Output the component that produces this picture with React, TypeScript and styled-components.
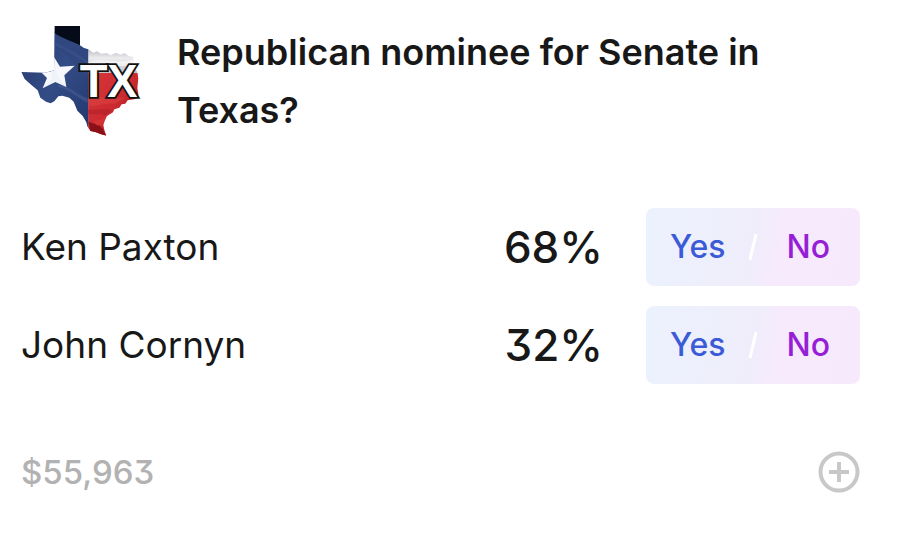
import React from "react";
import styled, { createGlobalStyle } from "styled-components";

const GlobalStyle = createGlobalStyle`
  *, *::before, *::after { box-sizing: border-box; }
  body {
    margin: 0;
    background: #ffffff;
    color: #181818;
    font-family: Inter, "Liberation Sans", sans-serif;
    font-feature-settings: "cv09";
  }
  button { font: inherit; border: 0; padding: 0; background: none; cursor: pointer; }
`;

const Card = styled.article`
  padding: 23px 40px 32px 21px;
`;

const Header = styled.header`
  display: flex;
  align-items: flex-start;
  gap: 36px;
`;

const StateLogo = styled.svg`
  flex: none;
  width: 120px;
  height: 116px;
`;

const Title = styled.h1`
  flex: 1;
  margin: 0;
  font-size: 36px;
  font-weight: 600;
  line-height: 58px;
`;

const Outcomes = styled.ul`
  display: grid;
  gap: 20px;
  margin: 69px 0 0;
  padding: 0;
  list-style: none;
`;

const Outcome = styled.li`
  display: flex;
  align-items: center;
`;

const Name = styled.span`
  flex: 1;
  font-size: 37px;
  line-height: 44px;
`;

const Chance = styled.span`
  margin-right: 43px;
  font-size: 44px;
  font-weight: 500;
  line-height: 54px;
`;

const Trade = styled.div`
  display: flex;
  align-items: center;
  justify-content: space-between;
  width: 214px;
  height: 78px;
  border-radius: 8px;
  background: linear-gradient(100deg, #ebf2fd 0%, #f0edfb 50%, #f6eafc 62%, #f7e9fc 100%);
  overflow: hidden;
`;

const Choice = styled.button<{ $side: "yes" | "no" }>`
  align-self: stretch;
  padding: ${(p) => (p.$side === "yes" ? "0 0 2px 24px" : "0 30px 2px 6px")};
  font-size: 32px;
  font-weight: 500;
  color: ${(p) => (p.$side === "yes" ? "#3b5bd6" : "#961fd6")};
`;

const Slash = styled.svg`
  width: 10px;
  height: 28px;
`;

const Footer = styled.footer`
  display: flex;
  align-items: center;
  justify-content: space-between;
  margin-top: 67px;
`;

const Volume = styled.span`
  font-size: 33px;
  line-height: 42px;
  font-weight: 500;
  color: #b2b2b2;
`;

const AddButton = styled.button`
  display: flex;
  color: #c8c8c8;
`;

const outcomes = [
  { name: "Ken Paxton", chance: "68%" },
  { name: "John Cornyn", chance: "32%" },
];

const texas =
  "M134 33H210V91L222 99L235 103L250 113L261 109L274 116L291 114L302 121L317 113L332 119L343 114L356 123L370 126V151L382 171L385 190L382 220L386 240L376 252L353 256L346 266L335 268L328 278L313 283L309 292L291 303L284 318L280 330L283 345L289 362L273 358L258 352L241 348L232 334L229 322L218 303L202 287L191 260L178 248L157 242L145 244L133 259L122 265L108 260L91 248L83 226L65 211L44 192L34 171L106 173L132 166Z";

function TexasLogo() {
  return (
    <StateLogo viewBox="33 24 360 348" role="img" aria-label="Texas">
      <defs>
        <clipPath id="state"><path d={texas} /></clipPath>
        <linearGradient id="blue" x1="0" y1="0" x2="1" y2="1">
          <stop offset="0" stopColor="#24386a" />
          <stop offset=".5" stopColor="#344c86" />
          <stop offset="1" stopColor="#21366c" />
        </linearGradient>
        <linearGradient id="red" x1="0" y1="0" x2="1" y2="1">
          <stop offset="0" stopColor="#d8363a" />
          <stop offset=".5" stopColor="#cb2a30" />
          <stop offset="1" stopColor="#8e1118" />
        </linearGradient>
        <linearGradient id="white" x1="0" y1="0" x2="0" y2="1">
          <stop offset="0" stopColor="#b9b9be" />
          <stop offset=".4" stopColor="#ececef" />
          <stop offset="1" stopColor="#c2c2c8" />
        </linearGradient>
      </defs>
      <g clipPath="url(#state)">
        <path d="M30 30H236V370H30Z" fill="url(#blue)" />
        <path d="M134 52C162 66 179 87 234 104V184C197 148 164 111 134 92Z" fill="#30477f" />
        <path d="M134 86C167 101 199 117 235 145" fill="none" stroke="#4b639b" strokeWidth="7" opacity=".3" />
        <path d="M146 210C175 211 203 240 233 250V263C200 249 177 222 146 217Z" fill="#4c6298" opacity=".5" />
        <path d="M134 33H210V91C185 78 155 70 134 54Z" fill="#050b19" />
        <path d="M235 100H390V174H235Z" fill="url(#white)" />
        <path d="M235 143C277 123 318 154 382 129V143C320 168 283 137 235 159Z" fill="#ffffff" opacity=".6" />
        <path d="M235 174H390V370H235Z" fill="url(#red)" />
        <path d="M235 255C267 237 301 256 349 246L313 267C280 260 257 280 235 270Z" fill="#df4a46" opacity=".4" />
        <path d="M233 284C259 286 280 277 306 286L286 301C266 292 253 302 234 296Z" fill="#a51c23" opacity=".4" />
        <path d="M235 320L266 331L277 340L289 363L241 349Z" fill="#8b1118" />
        <path d="M249 317L275 314L286 304L278 329L260 331Z" fill="#d23534" />
        <path d="M130 122L150 155L194 152L163 181L169 216L136 201L98 220L111 189L93 171L124 169Z" fill="#f6f8fc" />
        <path d="M131 136L142 184L168 214L136 201L98 219L124 193Z" fill="#d7e1ef" opacity=".25" />
      </g>
      <text
        x="209"
        y="247"
        fontFamily="Liberation Sans, sans-serif"
        fontSize="136"
        fontWeight="700"
        fill="#ffffff"
        stroke="#111111"
        strokeWidth="11"
        strokeLinejoin="miter"
        paintOrder="stroke"
      >
        TX
      </text>
    </StateLogo>
  );
}

export default function App() {
  return (
    <>
      <GlobalStyle />
      <Card>
        <Header>
          <TexasLogo />
          <Title>Republican nominee for Senate in Texas?</Title>
        </Header>
        <Outcomes>
          {outcomes.map(({ name, chance }) => (
            <Outcome key={name}>
              <Name>{name}</Name>
              <Chance>{chance}</Chance>
              <Trade role="group" aria-label={name}>
                <Choice type="button" $side="yes">Yes</Choice>
                <Slash viewBox="0 0 10 28" aria-hidden="true">
                  <path d="M8 1L2 27" stroke="#ffffff" strokeWidth="3" />
                </Slash>
                <Choice type="button" $side="no">No</Choice>
              </Trade>
            </Outcome>
          ))}
        </Outcomes>
        <Footer>
          <Volume>$55,963</Volume>
          <AddButton type="button" aria-label="Add to watchlist">
            <svg width="42" height="42" viewBox="0 0 42 42" fill="none" stroke="currentColor" strokeWidth="4">
              <circle cx="21" cy="21" r="18.5" />
              <path d="M21 11V31M11 21H31" />
            </svg>
          </AddButton>
        </Footer>
      </Card>
    </>
  );
}
